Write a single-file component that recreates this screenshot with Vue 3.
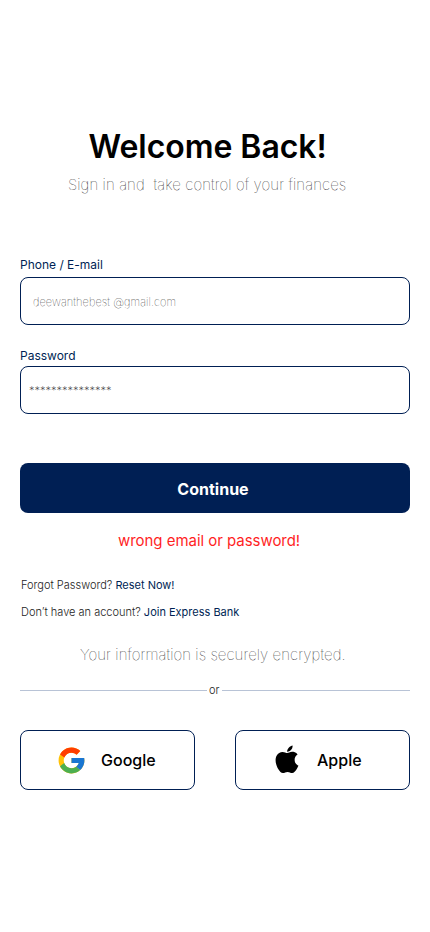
<script setup>
import { ref } from 'vue'

const email = ref('deewanthebest @gmail.com')
const password = ref('***************')
</script>

<template>
  <main class="screen">
    <header class="intro">
      <h1 class="title">Welcome Back!</h1>
      <p class="subtitle">Sign in and&nbsp; take control of your finances</p>
    </header>

    <form class="form" @submit.prevent>
      <div class="field">
        <label class="label" for="email">Phone / E-mail</label>
        <input id="email" v-model="email" class="input input-email" type="text" spellcheck="false" />
      </div>
      <div class="field">
        <label class="label" for="password">Password</label>
        <input id="password" v-model="password" class="input input-password" type="text" spellcheck="false" />
      </div>
      <button class="submit" type="submit"><span>Continue</span></button>
    </form>

    <p class="error">wrong email or password!</p>

    <div class="links">
      <p>Forgot Password? <a>Reset Now!</a></p>
      <p>Don’t have an account? <a>Join Express Bank</a></p>
    </div>

    <p class="secure">Your information is securely encrypted.</p>

    <div class="divider"><span>or</span></div>

    <div class="social">
      <button class="provider google" type="button">
        <svg class="google-icon" viewBox="0 0 48 48">
          <path fill="#FFC107" d="M43.611 20.083H42V20H24v8h11.303c-1.649 4.657-6.08 8-11.303 8-6.627 0-12-5.373-12-12s5.373-12 12-12c3.059 0 5.842 1.154 7.961 3.039l5.657-5.657C34.046 6.053 29.268 4 24 4 12.955 4 4 12.955 4 24s8.955 20 20 20 20-8.955 20-20c0-1.341-.138-2.65-.389-3.917z" />
          <path fill="#FF3D00" d="m6.306 14.691 6.571 4.819C14.655 15.108 18.961 12 24 12c3.059 0 5.842 1.154 7.961 3.039l5.657-5.657C34.046 6.053 29.268 4 24 4 16.318 4 9.656 8.337 6.306 14.691z" />
          <path fill="#4CAF50" d="M24 44c5.166 0 9.86-1.977 13.409-5.192l-6.19-5.238A11.91 11.91 0 0 1 24 36c-5.202 0-9.619-3.317-11.283-7.946l-6.522 5.025C9.505 39.556 16.227 44 24 44z" />
          <path fill="#1976D2" d="M43.611 20.083H42V20H24v8h11.303a12.04 12.04 0 0 1-4.087 5.571l6.193 5.238C36.971 39.205 44 34 44 24c0-1.341-.138-2.65-.389-3.917z" />
        </svg>
        <span>Google</span>
      </button>
      <button class="provider apple" type="button">
        <svg class="apple-icon" viewBox="0 0 24 24">
          <path transform="translate(0 -.8)" d="M12.152 6.896c-.948 0-2.415-1.078-3.96-1.04-2.04.027-3.91 1.183-4.961 3.014-2.117 3.675-.546 9.103 1.519 12.09 1.013 1.454 2.208 3.09 3.792 3.039 1.52-.065 2.09-.987 3.935-.987 1.831 0 2.35.987 3.96.948 1.637-.026 2.676-1.48 3.676-2.948 1.156-1.688 1.636-3.325 1.662-3.415-.039-.013-3.182-1.221-3.22-4.857-.026-3.04 2.48-4.494 2.597-4.559-1.429-2.09-3.623-2.324-4.39-2.376-2-.156-3.675 1.09-4.61 1.09z" />
          <path d="M16.8-.5c.1 1.6-.5 3.1-1.6 4.2-.8.8-1.9 1.3-3.1 1.2 0-1.3.6-2.6 1.6-3.6.9-.9 2-1.6 3.1-1.8z" />
        </svg>
        <span>Apple</span>
      </button>
    </div>
  </main>
</template>

<style>
body {
  background: #fff;
}
</style>

<style scoped>
.screen {
  box-sizing: border-box;
  width: 430px;
  height: 932px;
  padding: 126px 20px 0;
  overflow: hidden;
  background: #fff;
  color: #000;
  font-family: Inter, sans-serif;
}

h1,
p {
  margin: 0;
  white-space: nowrap;
}

.title {
  padding-left: 68.5px;
  font-size: 32px;
  font-weight: 600;
  letter-spacing: -0.05px;
  line-height: 42px;
}

.subtitle {
  margin-top: 7px;
  padding-left: 48px;
  font-size: 15px;
  font-weight: 100;
  letter-spacing: 0.1px;
  line-height: 20px;
}

.form {
  display: flex;
  flex-direction: column;
  padding-top: 62px;
}

.field {
  display: flex;
  flex-direction: column;
}

.field + .field {
  margin-top: 23px;
}

.label {
  color: #001f54;
  font-size: 12px;
  line-height: 16px;
  margin-bottom: 4px;
}

.field + .field .label {
  margin-bottom: 2px;
}

.input {
  box-sizing: border-box;
  width: 390px;
  height: 48px;
  border: 1px solid #001f54;
  border-radius: 8px;
  outline: none;
  background: #fff;
  color: #000;
  font-family: inherit;
  font-size: 11px;
  font-weight: 100;
}

.input-email {
  padding: 2px 12px 0;
  letter-spacing: 0.08px;
}

.input-password {
  padding: 2px 8px 0;
  color: #333;
  font-weight: 200;
}

.submit {
  height: 50px;
  margin-top: 49px;
  padding: 2px 4px 0 0;
  border: 0;
  border-radius: 8px;
  background: #001f54;
  color: #fff;
  font-family: inherit;
  font-size: 16px;
  font-weight: 700;
}

.error {
  margin-top: 18px;
  padding-left: 98px;
  color: #ff1f1f;
  font-size: 15px;
  font-weight: 400;
  letter-spacing: -0.04px;
  line-height: 20px;
}

.links {
  display: flex;
  flex-direction: column;
  gap: 11px;
  padding: 26px 0 0 1px;
  color: #1c1c1c;
  font-size: 11px;
  font-weight: 300;
  line-height: 16px;
}

.links a {
  color: #001f54;
  font-weight: 400;
}

.secure {
  margin-top: 25px;
  padding-left: 60px;
  font-size: 15px;
  font-weight: 100;
  letter-spacing: 0.07px;
  line-height: 20px;
}

.divider {
  display: flex;
  align-items: center;
  gap: 2px;
  margin-top: 17px;
  color: #222;
  font-size: 11px;
  font-weight: 300;
  line-height: 16px;
}

.divider::before,
.divider::after {
  content: '';
  flex: 0 0 187px;
  height: 1px;
  background: #b8c3d6;
}

.divider::after {
  flex: 1;
  margin-left: 1px;
}

.social {
  display: flex;
  justify-content: space-between;
  margin-top: 32px;
}

.provider {
  display: flex;
  align-items: center;
  box-sizing: border-box;
  width: 175px;
  height: 60px;
  border: 1px solid #001f54;
  border-radius: 8px;
  background: #fff;
  color: #000;
  font-family: inherit;
  font-size: 16px;
  font-weight: 500;
}

.google {
  gap: 14.5px;
  padding: 0 0 0 34.5px;
}

.apple {
  gap: 16px;
  padding: 0 0 0 37px;
}

.google-icon {
  width: 31px;
  height: 31px;
}

.apple-icon {
  width: 28px;
  height: 28px;
  overflow: visible;
}
</style>
